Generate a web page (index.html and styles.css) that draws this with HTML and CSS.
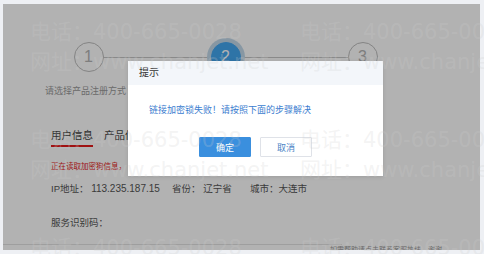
FILE: index.html
```html
<!DOCTYPE html>
<html lang="zh-CN">
<head>
    <meta charset="UTF-8">
    <meta name="viewport" content="width=device-width, initial-scale=1.0">
    <title>产品注册</title>
    <link rel="stylesheet" href="styles.css">
</head>
<body>
    <div class="page">
        <div class="card">
            <div class="steps">
                <div class="step">
                    <div class="step-num">1</div>
                    <div class="step-label">请选择产品注册方式</div>
                </div>
                <div class="step active">
                    <div class="step-num">2</div>
                    <div class="step-label">填写注册信息</div>
                </div>
                <div class="step">
                    <div class="step-num">3</div>
                    <div class="step-label">完成注册</div>
                </div>
            </div>

            <div class="content">
                <div class="tabs">
                    <span class="tab active">用户信息</span>
                    <span class="tab">产品信息</span>
                </div>
                <p class="reading">正在读取加密狗信息，</p>
                <div class="info-row">
                    <span class="info ip">IP地址： <b>113.235.187.15</b></span>
                    <span class="info prov">省份： 辽宁省</span>
                    <span class="info">城市：大连市</span>
                </div>
                <p class="code">服务识别码：</p>
            </div>

            <div class="footer">
                <div class="footer-line"></div>
                <p class="footer-text">如需帮助请点击联系客服热线，谢谢</p>
            </div>

            <div class="mask"></div>

            <div class="dialog">
                <div class="dialog-head">提示</div>
                <div class="dialog-body">
                    <p class="dialog-msg">链接加密锁失败！请按照下面的步骤解决</p>
                    <div class="dialog-btns">
                        <button class="btn btn-ok">确定</button>
                        <button class="btn btn-cancel">取消</button>
                    </div>
                </div>
            </div>
        </div>

        <div class="watermark">
            <div class="wm">电话：400-665-0028<br>网址：www.chanjet.net</div>
            <div class="wm">电话：400-665-0028<br>网址：www.chanjet.net</div>
            <div class="wm">电话：400-665-0028<br>网址：www.chanjet.net</div>
            <div class="wm">电话：400-665-0028<br>网址：www.chanjet.net</div>
            <div class="wm">电话：400-665-0028<br>网址：www.chanjet.net</div>
            <div class="wm">电话：400-665-0028<br>网址：www.chanjet.net</div>
        </div>
    </div>
</body>
</html>
```

FILE: styles.css
```css
body {
    margin: 0;
    background-color: #eef0f4;
    font-family: "Liberation Sans", "Noto Sans CJK SC", sans-serif;
    color: #555;
}
.page {
    position: relative;
    width: 484px;
    height: 254px;
    padding: 4px 4px 4px 3px;
    box-sizing: border-box;
    overflow: hidden;
}
.card {
    position: relative;
    height: 246px;
    background-color: #fff;
    overflow: hidden;
}
p {
    margin: 0;
}

/* steps */
.steps {
    position: relative;
    display: flex;
    margin: 38px 0 0 17px;
}
.steps::before {
    content: "";
    position: absolute;
    top: 15px;
    left: 68px;
    width: 274px;
    height: 1px;
    background-color: #c4c4c4;
}
.step {
    width: 137px;
    display: flex;
    flex-direction: column;
    align-items: center;
}
.step-num {
    position: relative;
    width: 28px;
    height: 28px;
    border: 1px solid #bdbdbd;
    border-radius: 50%;
    background-color: #fff;
    color: #b5b5b5;
    font-size: 16px;
    line-height: 28px;
    text-align: center;
}
.step.active .step-num {
    border-color: #43a6f0;
    background-color: #43a6f0;
    color: #fff;
    box-shadow: 0 0 0 4px #c2d9ea;
}
.step-label {
    margin-top: 13px;
    font-size: 9px;
    line-height: 12px;
    color: #9a9a9a;
    white-space: nowrap;
}
.step:first-child .step-label {
    margin-right: 6px;
}

/* content */
.content {
    padding-left: 48px;
}
.tabs {
    display: flex;
    gap: 11px;
    margin-top: 31px;
}
.tab {
    font-size: 10.5px;
    line-height: 14px;
    color: #444;
    padding-bottom: 3px;
    border-bottom: 2px solid transparent;
}
.tab.active {
    border-bottom-color: #e41b1b;
}
.reading {
    margin-top: 14px;
    font-size: 7.5px;
    line-height: 12px;
    color: #e21a1a;
}
.info-row {
    display: flex;
    margin-top: 9px;
    font-size: 9.5px;
    line-height: 14px;
    color: #555;
}
.info b {
    font-weight: normal;
    font-size: 10px;
}
.ip {
    width: 121px;
}
.prov {
    width: 78px;
}
.code {
    margin-top: 20px;
    font-size: 9.5px;
    line-height: 14px;
    color: #555;
}

/* footer */
.footer {
    margin-top: 14px;
}
.footer-line {
    width: 339px;
    height: 1px;
    background-color: #e2e2e2;
}
.footer-text {
    padding-left: 327px;
    font-size: 7px;
    line-height: 10px;
    color: #999;
    white-space: nowrap;
}

/* modal */
.mask {
    position: absolute;
    inset: 0;
    background-color: rgba(0, 0, 0, 0.3);
}
.dialog {
    position: absolute;
    left: 125px;
    top: 57px;
    width: 255px;
    height: 115px;
    background-color: #fff;
    box-shadow: 0 1px 4px rgba(0, 0, 0, 0.12);
}
.dialog-head {
    height: 24px;
    line-height: 24px;
    padding-left: 11px;
    background-color: #f3f6fa;
    font-size: 10px;
    color: #333;
}
.dialog-body {
    padding: 19px 0 0 21px;
}
.dialog-msg {
    font-size: 9px;
    line-height: 12px;
    color: #3b7dcf;
}
.dialog-btns {
    display: flex;
    justify-content: center;
    gap: 9px;
    margin: 21px 0 0 -21px;
}
.btn {
    width: 52px;
    height: 20px;
    padding: 0;
    font-family: inherit;
    font-size: 9px;
    border-radius: 1px;
    cursor: pointer;
}
.btn-ok {
    border: 1px solid #3a8fde;
    background-color: #3a8fde;
    color: #fff;
}
.btn-cancel {
    border: 1px solid #dfe2e8;
    background-color: #fff;
    color: #4a84c6;
}

/* watermark */
.watermark {
    position: absolute;
    left: 30px;
    top: 17px;
    display: grid;
    grid-template-columns: 270px 270px;
    grid-auto-rows: 108px;
    pointer-events: none;
}
.wm {
    font-family: "DejaVu Sans", "Noto Sans CJK SC", sans-serif;
    font-size: 21px;
    line-height: 30px;
    color: rgba(205, 205, 205, 0.24);
    white-space: nowrap;
}
```
